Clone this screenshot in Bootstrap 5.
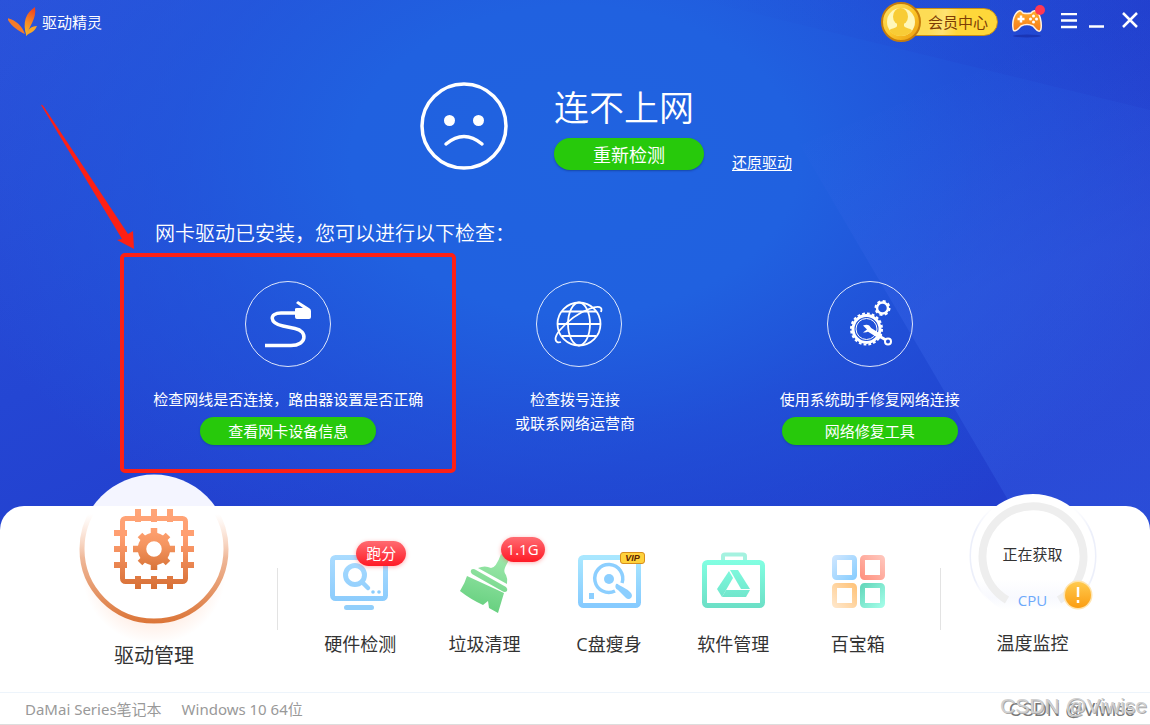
<!DOCTYPE html>
<html lang="zh-CN">
<head>
<meta charset="utf-8">
<meta name="viewport" content="width=device-width, initial-scale=1">
<title>驱动精灵</title>
<link rel="stylesheet" href="https://cdn.jsdelivr.net/npm/bootstrap@5.3.0/dist/css/bootstrap.min.css">
<style>
  body {
    font-family: "Open Sans", "Noto Sans CJK SC", sans-serif;
    font-size: 15px;
    line-height: 24px;
    color: #fff;
    background: #2344d1;
    overflow-x: hidden;
  }
  .backdrop {
    background:
      radial-gradient(ellipse 640px 440px at 50% 160px, #2063e0 0%, #2061e0 35%, rgba(32, 92, 222, .6) 62%, rgba(34, 68, 210, 0) 100%),
      linear-gradient(155deg, #2b52da 0%, #2446d3 32%, #223ccc 60%, #2444d2 100%);
  }
  .facets { inset: 0; width: 100%; height: 100%; pointer-events: none; }
  svg { display: block; flex: none; }
  .topbar { height: 44px; padding: 0 11px 0 8px; }
  .plain-btn { border: 0; background: none; padding: 0; color: inherit; }
  .member {
    height: 28px; padding: 0 9px 0 27px;
    border: 1px solid #c98f14; border-radius: 14px;
    background: linear-gradient(100deg, #fddc55 0 30%, #fee272 45%, #fed73a 60%);
    color: #7c3c05; line-height: 24px;
  }
  .member svg { left: -20px; top: -7px; }
  .game { margin-left: 13px; }
  .status { padding: 38px 0 0 62px; }
  .status-text { margin-left: 46px; }
  .status-title { font-size: 35px; line-height: 52px; font-weight: 350; margin: 0 0 4px; }
  .go { background: #27c90b; border: 0; border-radius: 16px; color: #fff; padding: 0; box-shadow: 0 1px 2px #1747a8; }
  .go-lg { width: 150px; height: 32px; font-size: 18px; line-height: 34px; }
  .go-sm { width: 176px; height: 28px; margin-top: 6px; line-height: 28px; }
  .restore { line-height: 16px; color: #fff; margin-left: 28px; text-underline-offset: 2px; }
  .hint { font-size: 20px; line-height: 32px; margin: 48px 0 31px 155px; font-weight: 350; }
  .checks { padding: 0 135px 0 143px; }
  .checks p { margin: 20px 0 0; }
  .mark-box { border: 4px solid #fd2015; border-radius: 5px; left: 120px; top: 253px; width: 336px; height: 220px; pointer-events: none; }
  .mark-arrow { left: 40px; top: 104px; pointer-events: none; }
  .dock { background: #fff; color: #333; border-radius: 24px 24px 0 0; min-height: 186px; }
  .dock a { color: inherit; text-decoration: none; font-size: 18px; }
  .dock-main { width: 277px; padding-left: 31px; margin-top: -32px; }
  .dock .dock-main a { font-size: 20px; }
  .dock-main svg { margin-bottom: 20px; overflow: visible; }
  .dock-items { padding: 44px 20px 0; }
  .dock-items > a { width: 20%; }
  .dock-items svg { margin-bottom: 18px; }
  .rule { width: 1px; height: 62px; margin-top: 62px; background: #e3e3e3; }
  .dock-temp { width: 209px; padding-right: 26px; margin-top: -12px; }
  .dock-temp svg { overflow: visible; }
  .gauge { margin-bottom: 13px; font-size: 15px; }
  .gauge-state { left: 0; right: 0; top: 48px; }
  .gauge-name { left: 0; right: 0; top: 94px; color: #6da9fb; }
  .pill { height: 25px; border-radius: 13px; background: linear-gradient(#ff6b71, #ff1a26); color: #fff; font-size: 15px; line-height: 25px; padding: 0 10px; box-shadow: 0 1px 4px rgba(255, 60, 60, .4); white-space: nowrap; }
  .pill-score { left: 28px; top: -9px; }
  .pill-size { left: 48px; top: -13px; padding: 0 6px; }
  .vip { left: 43px; top: 2px; width: 25px; height: 12px; border: 1px solid #d78e1c; border-radius: 3px; background: #ffd23c; color: #5c2500; font: italic bold 9px/10px "Liberation Sans", sans-serif; }
  .foot { background: #fff; color: #999; border-top: 1px solid #edf4fb; border-bottom: 1px solid #ddd; height: 33px; padding: 0 3px 0 25px; line-height: 33px; font-family: "Noto Sans", "Noto Sans CJK SC", sans-serif; }
  .sign { font-family: "Liberation Sans", sans-serif; line-height: 28px; white-space: nowrap; }
  .sign-back { font-size: 18px; color: #777; right: 15px; top: 3px; }
  .sign-front { font-size: 21px; color: #d0d0d0; right: 3px; top: -1px; text-shadow: 1px 1px 0 #aaa; }
</style>
</head>
<body>
<div class="backdrop position-relative d-flex flex-column min-vh-100">
  <svg class="facets position-absolute" viewBox="0 0 1150 725" preserveAspectRatio="none" aria-hidden="true">
    <defs>
      <linearGradient id="fa" gradientUnits="userSpaceOnUse" x1="900" y1="90" x2="1040" y2="500"><stop offset="0" stop-color="#3b67ea" stop-opacity="0"/><stop offset=".5" stop-color="#3b67ea" stop-opacity=".35"/><stop offset="1" stop-color="#3b67ea" stop-opacity=".3"/></linearGradient>
      <linearGradient id="fb" x1="0" y1="0" x2="1" y2="0"><stop offset="0" stop-color="#1f35c4" stop-opacity="0"/><stop offset="1" stop-color="#2038c8" stop-opacity=".25"/></linearGradient>
    </defs>
    <path d="M800 145L1150 0V725H1140Z" fill="url(#fa)"/>
    <path d="M700 0H1150V110Z" fill="url(#fb)"/>
  </svg>

  <header class="topbar position-relative d-flex align-items-center">
    <svg width="30" height="32" viewBox="0 0 30 32" aria-hidden="true">
      <defs><linearGradient id="lg" x1=".6" y1="0" x2=".4" y2="1"><stop offset="0" stop-color="#f0421c"/><stop offset=".55" stop-color="#f68a25"/><stop offset="1" stop-color="#f9b824"/></linearGradient></defs>
      <path d="M27 1C18 7 14 16 18.500 30C21 20 29 13 27 1Z" fill="url(#lg)"/>
      <path d="M-1 12C8 14 14 20 17 28C10 25 2 19 -1 12Z" fill="#f47b2a"/>
      <path d="M29 20C23 20 19 24 18 30C22 26 26 27 29 20Z" fill="#f9a825"/>
    </svg>
    <span class="ms-1 me-auto">驱动精灵</span>
    <button class="member position-relative" type="button">
      <svg class="position-absolute" width="40" height="40" viewBox="0 0 40 40" aria-hidden="true">
        <defs><linearGradient id="cn" x1="0" y1="0" x2="1" y2="1"><stop offset="0" stop-color="#ffe36a"/><stop offset=".5" stop-color="#fcc92c"/><stop offset="1" stop-color="#e99a0c"/></linearGradient></defs>
        <circle cx="20" cy="20" r="19" fill="url(#cn)" stroke="#c77d0c" stroke-width="2"/>
        <circle cx="20" cy="20" r="14" fill="#fff7b8"/>
        <ellipse cx="19.500" cy="14.500" rx="7.500" ry="8.500" fill="#f8cc36"/>
        <path d="M16 20H23V24C25 27 30 26 31 28.500Q27 34 20 34Q12 34 8.500 28.500C9 26 15 27 16 24Z" fill="#f8cc36"/>
      </svg>
      会员中心
    </button>
    <button class="plain-btn game" type="button" aria-label="游戏">
      <svg width="34" height="34" viewBox="0 0 34 34">
        <defs><linearGradient id="gp" x1="0" y1="0" x2="0" y2="1"><stop offset="0" stop-color="#ffae2e"/><stop offset="1" stop-color="#f57a17"/></linearGradient></defs>
        <ellipse cx="16" cy="31" rx="14" ry="1.500" fill="#1a35b4"/>
        <path d="M8 6Q10 5 12 8Q16 9 20 8Q22 5 25 6C29 8 31 18 30 24C29 28 26 26 22 21Q16 18 10 21C5 27 2 27 2 23C1 17 3 8 8 6Z" fill="url(#gp)" stroke="#fff1e0" stroke-width="1.500"/>
        <path d="M10 10.500V17.500M6.500 14H13.500" stroke="#fff" stroke-width="2.500"/>
        <g fill="#fff"><circle cx="22.500" cy="11" r="1.500"/><circle cx="22.500" cy="17" r="1.500"/><circle cx="19.500" cy="14" r="1.500"/><circle cx="25.500" cy="14" r="1.500"/></g>
        <circle cx="29" cy="5" r="5" fill="#ff3853"/>
      </svg>
    </button>
    <button class="plain-btn ms-3" type="button" aria-label="菜单"><svg width="16" height="18" viewBox="0 0 16 18" stroke="#fff" stroke-width="2.500"><path d="M0 1H16M0 7.500H16M0 14H16"/></svg></button>
    <button class="plain-btn ms-2 ps-1" type="button" aria-label="最小化"><svg width="16" height="18" viewBox="0 0 16 18" stroke="#fff" stroke-width="2.500"><path d="M0 13.500H15"/></svg></button>
    <button class="plain-btn ms-3" type="button" aria-label="关闭"><svg width="18" height="20" viewBox="0 0 18 20" stroke="#fff" stroke-width="2.500"><path d="M2 1L16 15M16 1L2 15"/></svg></button>
  </header>

  <main class="position-relative flex-grow-1">
    <section class="status d-flex justify-content-center align-items-end">
      <svg width="88" height="88" viewBox="0 0 88 88" fill="none" stroke="#fff" aria-hidden="true">
        <circle cx="44" cy="44" r="42" stroke-width="3.500"/>
        <circle cx="29.500" cy="38.500" r="5.500" fill="#fff" stroke="none"/><circle cx="58.500" cy="38.500" r="5.500" fill="#fff" stroke="none"/>
        <path d="M26 62Q44 47 62 62" stroke-width="3.500" stroke-linecap="round"/>
      </svg>
      <div class="status-text">
        <h1 class="status-title">连不上网</h1>
        <button class="go go-lg" type="button">重新检测</button>
      </div>
      <a class="restore" href="#">还原驱动</a>
    </section>
    <h2 class="hint">网卡驱动已安装，您可以进行以下检查：</h2>
    <section class="checks row g-0 text-center">
      <div class="col d-flex flex-column align-items-center">
        <svg width="86" height="86" viewBox="0 0 86 86" fill="none" stroke="#fff" aria-hidden="true">
          <circle cx="43" cy="43" r="42.500" stroke-opacity=".85"/>
          <path d="M20 64.500H46C62 64.500 63 50 50 47.500L38 45C24 42 24 32 36 32H50" stroke-width="3.500"/>
          <path d="M50 28Q50 27 52 27L58 27L51 22L53 20L64 27Q66 28 66 30V36Q66 38 64 38H52Q50 38 50 36Z" fill="#fff" stroke="none"/>
        </svg>
        <p>检查网线是否连接，路由器设置是否正确</p>
        <button class="go go-sm" type="button">查看网卡设备信息</button>
      </div>
      <div class="col d-flex flex-column align-items-center">
        <svg width="86" height="86" viewBox="0 0 86 86" fill="none" stroke="#fff" aria-hidden="true">
          <circle cx="43" cy="43" r="42.500" stroke-opacity=".85"/>
          <g stroke-width="1.800"><circle cx="43" cy="43" r="21.500"/><ellipse cx="43" cy="43" rx="11" ry="21.500"/><path d="M21 43H65M26 30.500H60M26 55H60"/>
          <path d="M25 61C19 63 17 57 24 49Q37 34 53 28C63 24 67 26 65 31"/></g>
        </svg>
        <p class="pe-2">检查拨号连接<br>或联系网络运营商</p>
      </div>
      <div class="col d-flex flex-column align-items-center">
        <svg width="86" height="86" viewBox="0 0 86 86" fill="none" stroke="#fff" aria-hidden="true">
          <circle cx="43" cy="43" r="42.500" stroke-opacity=".85"/>
          <circle cx="39.500" cy="48" r="13.500" stroke-width="3"/><circle cx="39.500" cy="48" r="15.500" stroke-width="2" stroke-dasharray="2.800 2.070"/>
          <circle cx="39.500" cy="48" r="10.500" stroke-width="1"/>
          <path d="M36 44.500Q42 42 44 47Q42 52 36 51.500L40 48.500Z" fill="#fff" stroke="none"/>
          <path d="M42 48.500L54 56" stroke-width="5"/><path d="M52 55L59 59" stroke-width="3"/>
          <circle cx="61" cy="60.500" r="3" stroke-width="2"/>
          <circle cx="55.500" cy="27" r="5.500" stroke-width="2.500"/><circle cx="55.500" cy="27" r="7" stroke-width="2" stroke-dasharray="3 2.498"/>
        </svg>
        <p>使用系统助手修复网络连接</p>
        <button class="go go-sm" type="button">网络修复工具</button>
      </div>
    </section>
  </main>

  <nav class="dock position-relative d-flex align-items-start text-center">
    <div class="dock-main">
      <a href="#" class="d-flex flex-column align-items-center">
        <svg width="148" height="150" viewBox="0 0 148 150" fill="none" aria-hidden="true">
          <defs>
            <linearGradient id="rg" gradientUnits="userSpaceOnUse" x1="0" y1="40" x2="0" y2="150"><stop offset="0" stop-color="#fbd0b8" stop-opacity="0"/><stop offset=".4" stop-color="#efb899"/><stop offset="1" stop-color="#db7436"/></linearGradient>
            <linearGradient id="ch" gradientUnits="userSpaceOnUse" x1="0" y1="35" x2="0" y2="115"><stop offset="0" stop-color="#ffa578"/><stop offset=".35" stop-color="#ff9e70"/><stop offset="1" stop-color="#d66f35"/></linearGradient>
            <linearGradient id="gg" gradientUnits="userSpaceOnUse" x1="0" y1="54" x2="0" y2="96"><stop offset="0" stop-color="#ffa172"/><stop offset=".4" stop-color="#f59560"/><stop offset="1" stop-color="#d87337"/></linearGradient>
            <linearGradient id="cb" gradientUnits="userSpaceOnUse" x1="0" y1="0" x2="0" y2="150"><stop offset=".213" stop-color="#f4f5ff"/><stop offset=".214" stop-color="#fff"/></linearGradient>
            <radialGradient id="gl"><stop offset=".75" stop-color="#ff9966" stop-opacity=".13"/><stop offset="1" stop-color="#ff9966" stop-opacity="0"/></radialGradient>
          </defs>
          <ellipse cx="74" cy="98" rx="72" ry="72" fill="url(#gl)"/>
          <circle cx="74" cy="75" r="74.500" fill="url(#cb)"/>
          <circle cx="74" cy="75" r="72" stroke="url(#rg)" stroke-width="5"/>
          <rect x="42.500" y="44.500" width="63" height="63" rx="3" stroke="url(#ch)" stroke-width="5"/>
          <g fill="url(#ch)"><path d="M55 35H61V48H55ZM71 35H77V48H71ZM87 35H93V48H87ZM55 102H61V115H55ZM71 102H77V115H71ZM87 102H93V115H87Z"/><path d="M34 56H47V62H34ZM34 72H47V78H34ZM34 88H47V94H34ZM101 56H114V62H101ZM101 72H114V78H101ZM101 88H114V94H101Z"/></g>
          <g stroke="url(#gg)"><circle cx="74" cy="75" r="12" stroke-width="8.500"/>
          <path d="M74 54V62M74 88V96M53 75H61M87 75H95M60 61L65 66M83 84L88 89M88 61L83 66M65 84L60 89" stroke-width="6.500"/></g>
        </svg>
        <span>驱动管理</span>
      </a>
    </div>
    <div class="rule"></div>
    <div class="dock-items d-flex flex-grow-1">
      <a href="#" class="d-flex flex-column align-items-center">
        <span class="position-relative">
          <svg width="64" height="64" viewBox="0 0 64 64" fill="none" aria-hidden="true">
            <defs><linearGradient id="bl" gradientUnits="userSpaceOnUse" x1="0" y1="4" x2="0" y2="60"><stop offset="0" stop-color="#abdcff"/><stop offset="1" stop-color="#86c9fc"/></linearGradient></defs>
            <g stroke="url(#bl)"><rect x="4.500" y="7.500" width="53" height="41" rx="3" stroke-width="5"/><circle cx="27" cy="25" r="9.500" stroke-width="5"/><path d="M34 32L40 38" stroke-width="4.500" stroke-linecap="round"/></g>
            <rect x="16" y="55" width="30" height="5" rx="2.500" fill="#92cffb"/><circle cx="45" cy="42" r="1.800" fill="#8ccdfc"/><circle cx="51" cy="42" r="1.800" fill="#8ccdfc"/>
          </svg>
          <span class="pill pill-score position-absolute">跑分</span>
        </span>
        <span>硬件检测</span>
      </a>
      <a href="#" class="d-flex flex-column align-items-center">
        <span class="position-relative">
          <svg width="64" height="64" viewBox="0 0 64 64" aria-hidden="true">
            <defs><linearGradient id="gr" gradientUnits="userSpaceOnUse" x1="45" y1="0" x2="30" y2="62"><stop offset="0" stop-color="#a3ebb0"/><stop offset="1" stop-color="#65cf7e"/></linearGradient></defs>
            <g fill="url(#gr)"><path d="M48 4L57 9C51 18 50 21 53 25Q55 29 54 34L25 18Q32 15 38 18Q43 18 48 4Z"/><path d="M18 20Q20 18 23 20L53 37Q55 39 54 41Q52 43 49 41L19 24Q17 22 18 20Z"/><path d="M14 26L51 43L45 63L36 58L35 51L30 55Q17 49 7 41Q12 33 14 26Z"/></g>
          </svg>
          <span class="pill pill-size position-absolute">1.1G</span>
        </span>
        <span>垃圾清理</span>
      </a>
      <a href="#" class="d-flex flex-column align-items-center">
        <span class="position-relative">
          <svg width="64" height="64" viewBox="0 0 64 64" fill="none" aria-hidden="true">
            <defs><linearGradient id="dk" x1="0" y1="0" x2="0" y2="1"><stop offset="0" stop-color="#a9e7ff"/><stop offset="1" stop-color="#86cbff"/></linearGradient></defs>
            <rect x="3.500" y="7.500" width="58" height="48" rx="3" stroke="url(#dk)" stroke-width="5"/>
            <path d="M45 33A14 14 0 1 0 38 41" stroke="#8ccfff" stroke-width="3.500"/><circle cx="32" cy="29" r="5" fill="#8ccfff"/>
            <path d="M39 34Q37 38 41 40L49 48C52 51 57 47 54 43Q52 40 42 35Q40 33 39 34Z" fill="#8ccfff"/><path d="M12 43H17V49H12Z" fill="#8ccfff"/>
          </svg>
          <span class="vip position-absolute">VIP</span>
        </span>
        <span>C盘瘦身</span>
      </a>
      <a href="#" class="d-flex flex-column align-items-center">
        <svg width="64" height="64" viewBox="0 0 64 64" fill="none" aria-hidden="true">
          <defs><linearGradient id="tq" gradientUnits="userSpaceOnUse" x1="0" y1="10" x2="0" y2="58"><stop offset="0" stop-color="#82ffe2"/><stop offset="1" stop-color="#6cdfc6"/></linearGradient></defs>
          <path d="M22 11V6Q22 4.500 24 4.500H42Q44 4.500 44 6V11" stroke="#a5f2e0" stroke-width="4"/>
          <rect x="3.500" y="12.500" width="58" height="43" rx="3" stroke="url(#tq)" stroke-width="5"/>
          <g fill="url(#tq)"><path d="M28 21L32 28L21 47L16 39Z"/><path d="M29 20H37L49 39H40Z"/><path d="M25 40H49L45 47H21Z"/></g>
        </svg>
        <span>软件管理</span>
      </a>
      <a href="#" class="d-flex flex-column align-items-center">
        <svg width="64" height="64" viewBox="0 0 64 64" fill="none" stroke-width="5" aria-hidden="true">
          <defs>
            <linearGradient id="q1" x1="0" y1="0" x2="1" y2="1"><stop offset="0" stop-color="#cbe5ff"/><stop offset="1" stop-color="#8ccfff"/></linearGradient>
            <linearGradient id="q2" x1="1" y1="0" x2="0" y2="1"><stop offset="0" stop-color="#ffc4ba"/><stop offset="1" stop-color="#ff9483"/></linearGradient>
            <linearGradient id="q3" x1="0" y1="1" x2="1" y2="0"><stop offset="0" stop-color="#ffe5c6"/><stop offset="1" stop-color="#ffc57e"/></linearGradient>
            <linearGradient id="q4" x1="0" y1="0" x2="1" y2="1"><stop offset="0" stop-color="#66d9bd"/><stop offset="1" stop-color="#a0fbe6"/></linearGradient>
          </defs>
          <rect x="8.500" y="7.500" width="20" height="20" rx="2" stroke="url(#q1)"/><rect x="36.500" y="7.500" width="20" height="20" rx="2" stroke="url(#q2)"/>
          <rect x="8.500" y="35.500" width="20" height="20" rx="2" stroke="url(#q3)"/><rect x="36.500" y="35.500" width="20" height="20" rx="2" stroke="url(#q4)"/>
        </svg>
        <span>百宝箱</span>
      </a>
    </div>
    <div class="rule"></div>
    <div class="dock-temp">
      <a href="#" class="d-flex flex-column align-items-center">
        <span class="gauge position-relative">
          <svg width="124" height="124" viewBox="0 0 124 124" fill="none" aria-hidden="true">
            <defs>
              <linearGradient id="sh" gradientUnits="userSpaceOnUse" x1="0" y1="0" x2="0" y2="124"><stop offset=".1" stop-color="#eef0fb" stop-opacity="0"/><stop offset=".3" stop-color="#eceffa"/><stop offset=".7" stop-color="#eceffa"/><stop offset=".9" stop-color="#fff" stop-opacity="0"/></linearGradient>
              <linearGradient id="wf" gradientUnits="userSpaceOnUse" x1="0" y1="85" x2="0" y2="116"><stop offset="0" stop-color="#fff"/><stop offset=".6" stop-color="#f8f9fe"/><stop offset="1" stop-color="#fff"/></linearGradient>
              <linearGradient id="wn" x1="0" y1="0" x2="0" y2="1"><stop offset="0" stop-color="#ffca4e"/><stop offset="1" stop-color="#fb9d12"/></linearGradient>
            </defs>
            <circle cx="62" cy="62" r="62" stroke="url(#sh)" stroke-width="3"/>
            <circle cx="62" cy="62" r="62" fill="url(#wf)"/>
            <path d="M36 106A50.500 50.500 0 1 1 88 106" stroke="#eee" stroke-width="8"/>
            <circle cx="107" cy="101" r="14.500" fill="#ffe4ae"/><circle cx="107" cy="101" r="13" fill="url(#wn)"/>
            <path d="M107 93V103M107 106V109" stroke="#fff" stroke-width="2.500"/>
          </svg>
          <span class="gauge-state position-absolute">正在获取</span>
          <span class="gauge-name position-absolute">CPU</span>
        </span>
        <span>温度监控</span>
      </a>
    </div>
  </nav>

  <footer class="foot position-relative d-flex">
    <span>DaMai Series笔记本</span>
    <span class="ms-3 ps-1">Windows 10 64位</span>
    <span class="sign sign-back position-absolute">CSDN @Viwise</span>
    <span class="sign sign-front position-absolute">CSDN @Viwise</span>
  </footer>

  <div class="mark-box position-absolute"></div>
  <svg class="mark-arrow position-absolute" width="100" height="148" viewBox="0 0 100 148" aria-hidden="true"><path d="M1 1Q2 0 4 3L88 130L93 127L94 145L77 136L82 135Z" fill="#fd2015"/></svg>
</div>
<script src="https://cdn.jsdelivr.net/npm/bootstrap@5.3.0/dist/js/bootstrap.bundle.min.js"></script>
</body>
</html>
